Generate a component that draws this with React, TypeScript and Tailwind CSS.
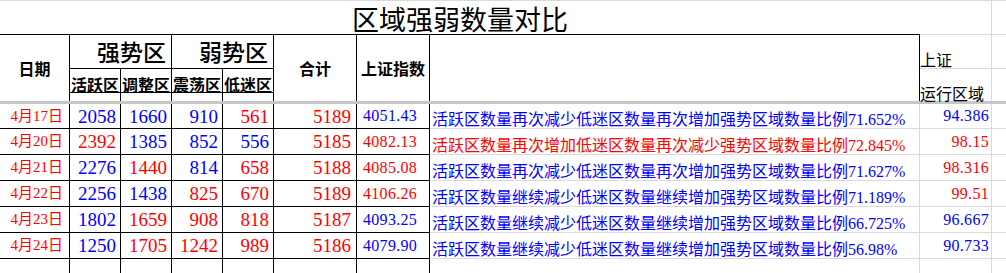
import clsx from "clsx";

const B = "text-[#0000ff]";
const R = "text-[#ff0000]";

type Val = [string, string];

interface Row {
  date: string;
  zones: Val[];
  total: Val;
  index: Val;
  note: Val;
  range: Val;
}

const rows: Row[] = [
  {
    date: "4月17日",
    zones: [["2058", B], ["1660", B], ["910", B], ["561", R]],
    total: ["5189", R],
    index: ["4051.43", B],
    note: ["活跃区数量再次减少低迷区数量再次增加强势区域数量比例71.652%", B],
    range: ["94.386", B],
  },
  {
    date: "4月20日",
    zones: [["2392", R], ["1385", B], ["852", B], ["556", B]],
    total: ["5185", R],
    index: ["4082.13", R],
    note: ["活跃区数量再次增加低迷区数量再次减少强势区域数量比例72.845%", R],
    range: ["98.15", R],
  },
  {
    date: "4月21日",
    zones: [["2276", B], ["1440", R], ["814", B], ["658", R]],
    total: ["5188", R],
    index: ["4085.08", R],
    note: ["活跃区数量再次减少低迷区数量再次增加强势区域数量比例71.627%", B],
    range: ["98.316", R],
  },
  {
    date: "4月22日",
    zones: [["2256", B], ["1438", B], ["825", R], ["670", R]],
    total: ["5189", R],
    index: ["4106.26", R],
    note: ["活跃区数量继续减少低迷区数量继续增加强势区域数量比例71.189%", B],
    range: ["99.51", R],
  },
  {
    date: "4月23日",
    zones: [["1802", B], ["1659", R], ["908", R], ["818", R]],
    total: ["5187", R],
    index: ["4093.25", B],
    note: ["活跃区数量继续减少低迷区数量继续增加强势区域数量比例66.725%", B],
    range: ["96.667", B],
  },
  {
    date: "4月24日",
    zones: [["1250", B], ["1705", R], ["1242", R], ["989", R]],
    total: ["5186", R],
    index: ["4079.90", B],
    note: ["活跃区数量继续减少低迷区数量继续增加强势区域数量比例56.98%", B],
    range: ["90.733", B],
  },
];

const cols =
  "grid grid-cols-[70px_51px_51px_51px_51px_83px_73px_490px_72px_14px]";
const blk = "border-black";
const gry = "border-[#dadada]";
const num = "font-['Liberation_Serif','Noto_Sans_CJK_SC',serif]";

export default function App() {
  return (
    <div className="w-[1006px] h-[273px] overflow-hidden bg-white font-['Noto_Sans_CJK_SC',sans-serif] text-black">
      {/* header */}
      <div className={clsx(cols, "grid-rows-[35px_34px_24px_8px]")}>
        <div
          className={clsx(
            "col-start-1 col-span-8 row-start-1 flex items-end justify-center border-t border-b leading-none text-[27px] pb-[2px]",
            blk,
            "border-t-[#dadada]"
          )}
        >
          区域强弱数量对比
        </div>
        <div className={clsx("col-start-9 row-start-1 border-t border-b border-r", gry)} />
        <div className={clsx("col-start-10 row-start-1 border-t border-b", gry)} />

        <div
          className={clsx(
            "col-start-1 row-start-2 row-span-3 flex items-center justify-center border-r font-bold text-[16px]",
            blk
          )}
        >
          日期
        </div>
        <div
          className={clsx(
            "col-start-2 col-span-2 row-start-2 flex items-center justify-end pr-[5px] border-r border-b text-[23px] font-medium leading-none",
            blk
          )}
        >
          强势区
        </div>
        <div
          className={clsx(
            "col-start-4 col-span-2 row-start-2 flex items-center justify-end pr-[5px] border-r border-b text-[23px] font-medium leading-none",
            blk
          )}
        >
          弱势区
        </div>
        <div className={clsx("col-start-2 row-start-3 flex items-end justify-center border-r border-b font-bold text-[16px] leading-none whitespace-nowrap", blk)}>
          活跃区
        </div>
        <div className={clsx("col-start-3 row-start-3 flex items-end justify-center border-r border-b font-bold text-[16px] leading-none whitespace-nowrap", blk)}>
          调整区
        </div>
        <div className={clsx("col-start-4 row-start-3 flex items-end justify-center border-r border-b font-bold text-[16px] leading-none whitespace-nowrap", blk)}>
          震荡区
        </div>
        <div className={clsx("col-start-5 row-start-3 flex items-end justify-center border-r border-b font-bold text-[16px] leading-none whitespace-nowrap", blk)}>
          低迷区
        </div>
        <div className={clsx("col-start-2 row-start-4 border-r", blk)} />
        <div className={clsx("col-start-3 row-start-4 border-r", blk)} />
        <div className={clsx("col-start-4 row-start-4 border-r", blk)} />
        <div className={clsx("col-start-5 row-start-4 border-r", blk)} />
        <div
          className={clsx(
            "col-start-6 row-start-2 row-span-3 flex items-center justify-center border-r font-bold text-[16px]",
            blk
          )}
        >
          合计
        </div>
        <div
          className={clsx(
            "col-start-7 row-start-2 row-span-3 flex items-center justify-center border-r font-bold text-[16px] whitespace-nowrap",
            blk
          )}
        >
          上证指数
        </div>
        <div className={clsx("col-start-8 row-start-2 row-span-3 border-r", blk)} />
        <div className={clsx("col-start-9 row-start-2 flex items-end border-r border-b text-[16px] leading-none pb-[1px]", gry)}>
          上证
        </div>
        <div className={clsx("col-start-9 row-start-3 row-span-2 flex items-end border-r text-[16px] leading-none whitespace-nowrap", gry)}>
          运行区域
        </div>
        <div className={clsx("col-start-10 row-start-2 border-b", gry)} />
        <div className="col-start-10 row-start-3 row-span-2" />
      </div>

      <div className="h-[3px] bg-[#c6c6c6]" />

      {/* body */}
      <div className={clsx(cols, "grid-rows-[25px_26px_26px_26px_26px_26px_14px]")}>
        {rows.map((r) => (
          <div key={r.date} className="contents">
            <div className={clsx("flex items-center justify-end pr-[6px] border-r border-b text-[15px] leading-none", blk, num, R)}>
              {r.date}
            </div>
            {r.zones.map(([v, c], i) => (
              <div key={i} className={clsx("flex items-center justify-end pr-[4px] border-r border-b text-[19px] leading-none", blk, num, c)}>
                {v}
              </div>
            ))}
            <div className={clsx("flex items-center justify-end pr-[5px] border-r border-b text-[19px] leading-none", blk, num, r.total[1])}>
              {r.total[0]}
            </div>
            <div className={clsx("flex items-center pl-[6px] border-r border-b text-[16px] leading-none tracking-[0.3px]", blk, num, r.index[1])}>
              {r.index[0]}
            </div>
            <div className={clsx("flex items-end pl-[2px] border-r border-b text-[16px] leading-none whitespace-nowrap", gry, num, r.note[1])}>
              {r.note[0]}
            </div>
            <div className={clsx("flex items-center justify-end pr-[2px] border-r border-b text-[16px] leading-none tracking-[0.3px]", gry, num, r.range[1])}>
              {r.range[0]}
            </div>
            <div className={clsx("border-b", gry)} />
          </div>
        ))}
        <div className={clsx("border-r", blk)} />
        <div className={clsx("border-r", blk)} />
        <div className={clsx("border-r", blk)} />
        <div className={clsx("border-r", blk)} />
        <div className={clsx("border-r", blk)} />
        <div className={clsx("border-r", blk)} />
        <div className={clsx("border-r", blk)} />
        <div className={clsx("border-r", gry)} />
        <div className={clsx("border-r", gry)} />
        <div />
      </div>
    </div>
  );
}
